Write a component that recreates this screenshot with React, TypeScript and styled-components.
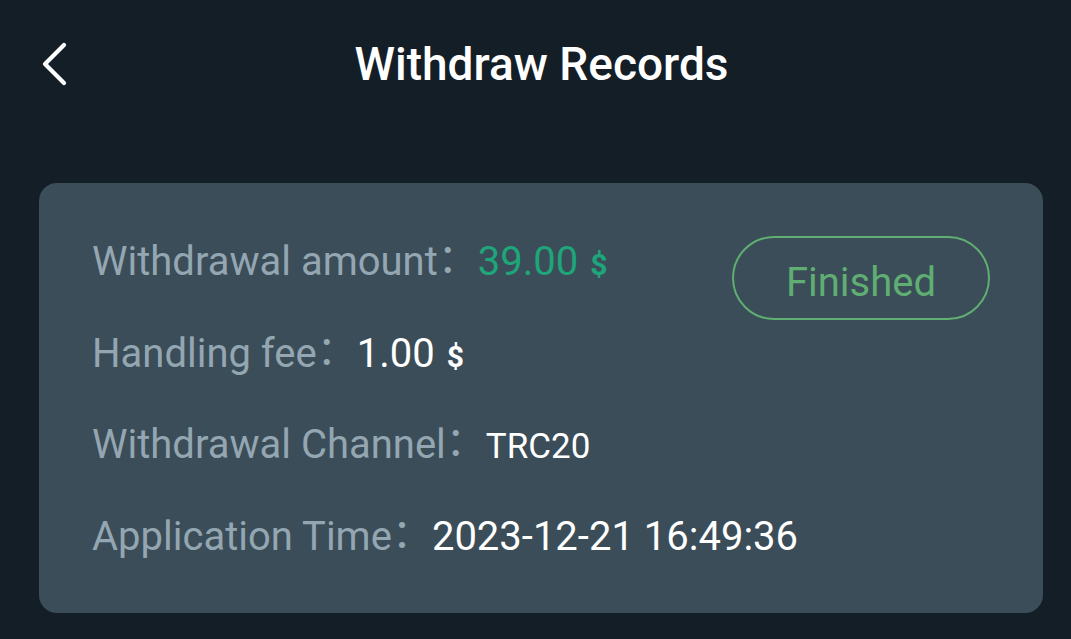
import React from "react";
import styled, { createGlobalStyle } from "styled-components";

const Global = createGlobalStyle`
  html, body { margin: 0; padding: 0; background: #141e27; }
  body { font-family: Roboto, "Noto Sans CJK SC", sans-serif; }
`;

const Page = styled.div`
  width: 1071px;
  height: 639px;
  background: #141e27;
  display: flex;
  flex-direction: column;
  overflow: hidden;
`;

const Header = styled.header`
  position: relative;
  height: 128px;
  display: flex;
  align-items: center;
  justify-content: center;
`;

const BackButton = styled.button`
  position: absolute;
  left: 32px;
  top: 38px;
  width: 40px;
  height: 52px;
  padding: 0;
  border: none;
  background: transparent;
  display: flex;
  align-items: center;
  justify-content: center;
`;

const Title = styled.h1`
  margin: 0 0 0 12px;
  color: #ffffff;
  font-size: 46px;
  font-weight: 500;
  letter-spacing: 0;
`;

const Card = styled.section`
  margin: 55px 28px 0 39px;
  height: 430px;
  background: #3b4d58;
  border-radius: 18px;
  position: relative;
  padding: 30px 53px 0;
  box-sizing: border-box;
  display: flex;
  flex-direction: column;
`;

const Row = styled.div`
  height: 91.5px;
  line-height: 91.5px;
  white-space: nowrap;
`;

const Label = styled.span`
  color: #93a6b1;
  font-size: 40px;
`;

const Colon = styled.span`
  vertical-align: 3px;
`;

const Value = styled.span<{ $color?: string; $size?: number }>`
  color: ${(p) => p.$color || "#ffffff"};
  font-size: ${(p) => p.$size || 40}px;
`;

const Unit = styled.span`
  font-size: 30px;
  font-weight: 700;
  margin-left: 12px;
`;

const StatusPill = styled.div`
  position: absolute;
  top: 53px;
  right: 53px;
  width: 258px;
  height: 84px;
  box-sizing: border-box;
  padding-top: 8px;
  border: 2px solid #5fae72;
  border-radius: 42px;
  color: #5fae72;
  font-size: 40px;
  display: flex;
  align-items: center;
  justify-content: center;
`;

const rows: { label: string; value: string; unit?: boolean; color?: string; size?: number }[] = [
  { label: "Withdrawal amount", value: "39.00", unit: true, color: "#1fa57a" },
  { label: "Handling fee", value: "1.00", unit: true },
  { label: "Withdrawal Channel", value: "TRC20", size: 35 },
  { label: "Application Time", value: "2023-12-21 16:49:36" },
];

export default function App() {
  return (
    <Page>
      <Global />
      <Header>
        <BackButton aria-label="Back">
          <svg width="32" height="50" viewBox="0 0 32 50" fill="none">
            <path d="M28 6 L9 25 L28 44" stroke="#fff" strokeWidth="4.2" strokeLinecap="round" strokeLinejoin="round" />
          </svg>
        </BackButton>
        <Title>Withdraw Records</Title>
      </Header>
      <Card>
        {rows.map((r) => (
          <Row key={r.label}>
            <Label>
              {r.label}
              <Colon>：</Colon>
            </Label>
            <Value $color={r.color} $size={r.size}>
              {r.value}
              {r.unit && <Unit>$</Unit>}
            </Value>
          </Row>
        ))}
        <StatusPill>Finished</StatusPill>
      </Card>
    </Page>
  );
}
